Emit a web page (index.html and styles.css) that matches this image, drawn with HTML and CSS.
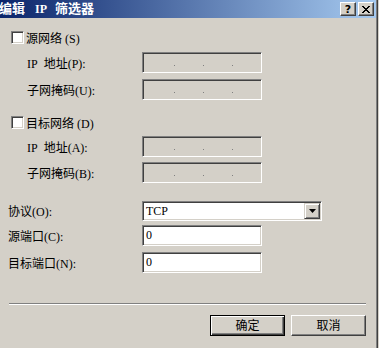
FILE: index.html
```html
<!DOCTYPE html>
<html lang="zh-CN">
<head>
  <meta charset="UTF-8">
  <title>编辑 IP 筛选器</title>
  <link rel="stylesheet" href="styles.css">
</head>
<body>
  <div class="window">
    <div class="titlebar">
      <span class="title"><span>编辑</span><span class="title-ip">IP</span><span>筛选器</span></span>
      <div class="title-buttons">
        <span class="tbtn">?</span>
        <span class="tbtn">
          <svg width="8" height="7" viewBox="0 0 8 7"><path d="M0 0h2v1h1v1h2v-1h1v-1h2v1h-1v1h-1v1h-1v1h1v1h1v1h1v1h-2v-1h-1v-1h-2v1h-1v1h-2v-1h1v-1h1v-1h1v-1h-1v-1h-1v-1h-1z" fill="#000"/></svg>
        </span>
      </div>
    </div>

    <div class="client">
      <div class="check-row first"><span class="checkbox"></span>源网络 (S)</div>
      <div class="field-row indent gap-a">
        <span class="label">IP&nbsp; 地址(P):</span>
        <span class="edit ip disabled"><i></i><i></i><i></i></span>
      </div>
      <div class="field-row indent gap-b">
        <span class="label">子网掩码(U):</span>
        <span class="edit ip disabled"><i></i><i></i><i></i></span>
      </div>

      <div class="check-row second"><span class="checkbox"></span>目标网络 (D)</div>
      <div class="field-row indent gap-c">
        <span class="label">IP&nbsp; 地址(A):</span>
        <span class="edit ip disabled"><i></i><i></i><i></i></span>
      </div>
      <div class="field-row indent gap-d">
        <span class="label">子网掩码(B):</span>
        <span class="edit ip disabled"><i></i><i></i><i></i></span>
      </div>

      <div class="field-row gap-e">
        <span class="label">协议(O):</span>
        <span class="combo"><span class="combo-text">TCP</span><span class="drop"><svg width="7" height="4" viewBox="0 0 7 4"><path d="M0 0h7l-3.5 4z" fill="#000"/></svg></span></span>
      </div>
      <div class="field-row gap-f">
        <span class="label">源端口(C):</span>
        <span class="edit port">0</span>
      </div>
      <div class="field-row gap-g">
        <span class="label">目标端口(N):</span>
        <span class="edit port">0</span>
      </div>

      <div class="separator"></div>

      <div class="button-row">
        <span class="btn default">确定</span>
        <span class="btn">取消</span>
      </div>
    </div>
  </div>
</body>
</html>
```

FILE: styles.css
```css
body {
  margin: 0;
  background: #d4d0c8;
  font-family: "Liberation Serif", "Noto Sans CJK SC", serif;
  font-size: 12px;
  color: #000;
  width: 379px;
  height: 348px;
  overflow: hidden;
}

.window {
  width: 376px;
  height: 348px;
  border-right: 1px solid #808080;
  box-shadow: 1px 0 0 #404040;
}

.titlebar {
  height: 18px;
  display: flex;
  align-items: center;
  background: linear-gradient(to right, #0a246a, #a6caf0);
  color: #fff;
}

.title {
  font-weight: bold;
  font-size: 13px;
  line-height: 18px;
  margin-left: -1px;
  display: flex;
}

.title-ip {
  margin: 0 8px 0 10px;
  font-size: 12px;
}

.title-buttons {
  margin-left: auto;
  display: flex;
  gap: 2px;
  margin-right: 2px;
}

.tbtn {
  width: 16px;
  height: 14px;
  box-sizing: border-box;
  background: #d4d0c8;
  border-top: 1px solid #fff;
  border-left: 1px solid #fff;
  border-right: 1px solid #404040;
  border-bottom: 1px solid #404040;
  box-shadow: inset -1px -1px 0 #808080;
  display: flex;
  align-items: center;
  justify-content: center;
  color: #000;
  font-weight: bold;
  font-size: 11px;
  font-family: "DejaVu Sans", sans-serif;
  line-height: 1;
}

.client {
  display: flex;
  flex-direction: column;
}

.check-row {
  display: flex;
  align-items: center;
  height: 13px;
  padding-left: 11px;
  gap: 2px;
}

.check-row.first { margin-top: 13px; }
.check-row.second { margin-top: 16px; }

.checkbox {
  width: 13px;
  height: 13px;
  box-sizing: border-box;
  background: #fff;
  border-top: 1px solid #808080;
  border-left: 1px solid #808080;
  border-right: 1px solid #fff;
  border-bottom: 1px solid #fff;
  box-shadow: inset 1px 1px 0 #404040, inset -1px -1px 0 #d4d0c8;
}

.field-row {
  display: flex;
  align-items: center;
  padding-left: 8px;
}

.field-row .label {
  width: 134px;
}

.field-row.indent .label {
  width: 115px;
  padding-left: 19px;
}

.gap-a { margin-top: 8px; }
.gap-b { margin-top: 6px; }
.gap-c { margin-top: 7px; }
.gap-d { margin-top: 5px; }
.gap-e { margin-top: 18px; }
.gap-f { margin-top: 4px; }
.gap-g { margin-top: 6px; }

.edit {
  height: 21px;
  box-sizing: border-box;
  background: #fff;
  border-top: 1px solid #808080;
  border-left: 1px solid #808080;
  border-right: 1px solid #fff;
  border-bottom: 1px solid #fff;
  box-shadow: inset 1px 1px 0 #404040, inset -1px -1px 0 #d4d0c8;
  display: flex;
  align-items: center;
}

.edit.disabled {
  background: #d4d0c8;
}

.edit.ip {
  width: 120px;
  padding-left: 31px;
  gap: 28px;
}

.edit.ip i {
  width: 1px;
  height: 1px;
  background: #808080;
  margin-top: 5px;
}

.edit.port {
  width: 120px;
  padding-left: 3px;
  line-height: 19px;
}

.combo {
  width: 180px;
  height: 20px;
  box-sizing: border-box;
  background: #fff;
  border-top: 1px solid #808080;
  border-left: 1px solid #808080;
  border-right: 1px solid #fff;
  border-bottom: 1px solid #fff;
  box-shadow: inset 1px 1px 0 #404040, inset -1px -1px 0 #d4d0c8;
  display: flex;
  align-items: flex-start;
  padding: 1px;
}

.combo-text {
  flex: 1;
  padding-left: 2px;
  line-height: 16px;
}

.drop {
  width: 16px;
  height: 16px;
  box-sizing: border-box;
  background: #d4d0c8;
  border-top: 1px solid #d4d0c8;
  border-left: 1px solid #d4d0c8;
  border-right: 1px solid #404040;
  border-bottom: 1px solid #404040;
  box-shadow: inset 1px 1px 0 #fff, inset -1px -1px 0 #808080;
  display: flex;
  align-items: center;
  justify-content: center;
}

.separator {
  margin: 30px 10px 0 9px;
  border-top: 1px solid #808080;
  border-bottom: 1px solid #fff;
  height: 0;
}

.button-row {
  display: flex;
  justify-content: flex-end;
  gap: 6px;
  margin-top: 10px;
  padding-right: 10px;
}

.btn {
  width: 75px;
  height: 21px;
  box-sizing: border-box;
  background: #d4d0c8;
  border-top: 1px solid #fff;
  border-left: 1px solid #fff;
  border-right: 1px solid #404040;
  border-bottom: 1px solid #404040;
  box-shadow: inset -1px -1px 0 #808080;
  display: flex;
  align-items: center;
  justify-content: center;
  line-height: 1;
}

.btn.default {
  border: 1px solid #000;
  box-shadow: inset 1px 1px 0 #fff, inset -1px -1px 0 #404040, inset -2px -2px 0 #808080;
}
```
